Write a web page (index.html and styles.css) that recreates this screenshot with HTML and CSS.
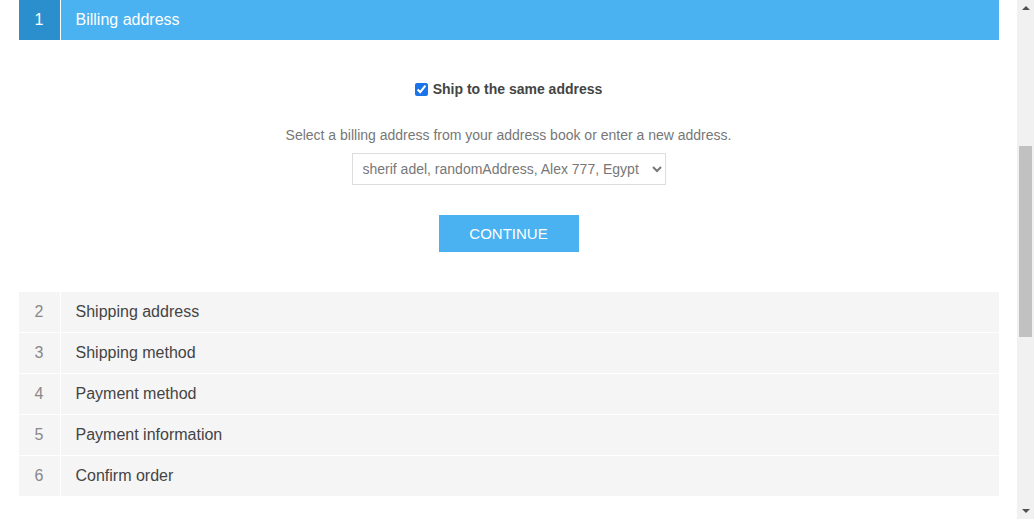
FILE: index.html
```html
<!DOCTYPE html>
<html lang="en">
<head>
<meta charset="utf-8">
<title>Checkout</title>
<link rel="stylesheet" href="styles.css">
</head>
<body>
<div class="page">
  <main class="main">
    <div class="checkout">
      <section class="step active">
        <div class="step-head">
          <span class="step-num">1</span>
          <span class="step-title">Billing address</span>
        </div>
        <div class="step-body">
          <label class="ship-same">
            <input type="checkbox" checked>
            <span>Ship to the same address</span>
          </label>
          <p class="hint">Select a billing address from your address book or enter a new address.</p>
          <div class="select-wrap">
            <select class="address-select">
              <option>sherif adel, randomAddress, Alex 777, Egypt</option>
            </select>
          </div>
          <button class="continue" type="button">CONTINUE</button>
        </div>
      </section>
      <section class="step">
        <div class="step-head"><span class="step-num">2</span><span class="step-title">Shipping address</span></div>
      </section>
      <section class="step">
        <div class="step-head"><span class="step-num">3</span><span class="step-title">Shipping method</span></div>
      </section>
      <section class="step">
        <div class="step-head"><span class="step-num">4</span><span class="step-title">Payment method</span></div>
      </section>
      <section class="step">
        <div class="step-head"><span class="step-num">5</span><span class="step-title">Payment information</span></div>
      </section>
      <section class="step">
        <div class="step-head"><span class="step-num">6</span><span class="step-title">Confirm order</span></div>
      </section>
    </div>
  </main>
  <div class="scrollbar">
    <span class="arrow up"></span>
    <div class="track"><div class="thumb"></div></div>
    <span class="arrow down"></span>
  </div>
</div>
</body>
</html>
```
FILE: styles.css
```css
html, body {
  margin: 0;
  padding: 0;
  height: 100%;
  overflow: hidden;
  background: #fff;
  font-family: "Liberation Sans", Arial, sans-serif;
}
.page {
  display: flex;
  height: 519px;
}
.main {
  flex: 1;
  display: flex;
  justify-content: center;
}
.checkout {
  width: 980px;
  display: flex;
  flex-direction: column;
  gap: 1px;
}
.step-head {
  display: flex;
  height: 40px;
  align-items: stretch;
  background: #f5f5f5;
  color: #444;
  font-size: 16px;
}
.step-num {
  width: 41px;
  border-right: 1px solid #fff;
  display: flex;
  align-items: center;
  justify-content: center;
  color: #888;
}
.step-title {
  display: flex;
  align-items: center;
  padding-left: 15px;
}
.step.active .step-head {
  background: #4ab2f1;
  color: #fff;
}
.step.active .step-num {
  background: #2b8fce;
  color: #fff;
}
.step-body {
  display: flex;
  flex-direction: column;
  align-items: center;
  padding: 40px 0 39px;
}
.ship-same {
  display: flex;
  align-items: center;
  gap: 5px;
  font-size: 14px;
  font-weight: bold;
  color: #444;
  height: 18px;
}
.ship-same input {
  margin: 0;
  width: 13px;
  height: 13px;
  accent-color: #1a73e8;
}
.hint {
  margin: 28px 0 0;
  font-size: 14px;
  color: #777;
  line-height: 18px;
}
.select-wrap {
  margin-top: 9px;
}
.address-select {
  height: 32px;
  width: 314px;
  border: 1px solid #ddd;
  border-radius: 0;
  background: #fff;
  color: #777;
  font-family: "Liberation Sans", Arial, sans-serif;
  font-size: 14px;
  padding: 0 6px;
}
.continue {
  margin-top: 30px;
  width: 140px;
  height: 37px;
  border: none;
  background: #4ab2f1;
  color: #fff;
  font-family: "Liberation Sans", Arial, sans-serif;
  font-size: 15px;
  padding: 0;
}
.scrollbar {
  width: 17px;
  background: #f1f1f1;
  display: flex;
  flex-direction: column;
  align-items: center;
}
.arrow {
  width: 0;
  height: 0;
  border-left: 4px solid transparent;
  border-right: 4px solid transparent;
  margin: 6px 0;
}
.arrow.up {
  border-bottom: 4px solid #505050;
}
.arrow.down {
  border-top: 4px solid #505050;
}
.track {
  flex: 1;
  width: 100%;
  display: flex;
  justify-content: center;
  padding-top: 130px;
}
.thumb {
  width: 13px;
  height: 191px;
  background: #c1c1c1;
}
```
